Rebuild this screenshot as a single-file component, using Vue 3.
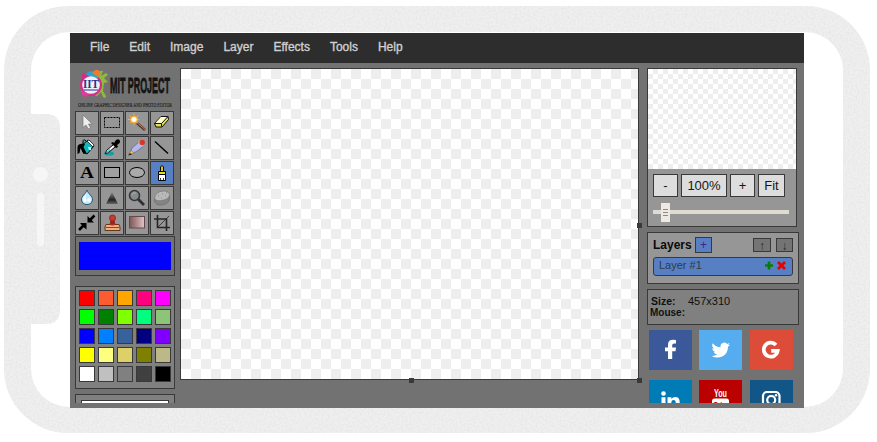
<script setup>
const menu = ['File', 'Edit', 'Image', 'Layer', 'Effects', 'Tools', 'Help']
const tools = [
  'select', 'marquee', 'wand', 'erase',
  'fill', 'picker', 'pencil', 'line',
  'letter', 'rect', 'ellipse', 'brush',
  'blur', 'sharpen', 'magnify', 'sponge',
  'shrink', 'stamp', 'gradient', 'crop',
]
const colors = [
  '#ff0000', '#ff5b31', '#ffa500', '#ff007f', '#ff00ff',
  '#00ff00', '#008000', '#7fff00', '#00ff7f', '#8cc478',
  '#0000ff', '#007fff', '#37629c', '#000080', '#7f00ff',
  '#ffff00', '#ffff7f', '#ddd068', '#808000', '#bdb888',
  '#ffffff', '#c0c0c0', '#808080', '#404040', '#000000',
]
</script>

<template>
  <main class="stage">
    <svg class="device" width="877" height="442" viewBox="0 0 877 442">
      <defs>
        <filter id="grain" x="0" y="0" width="100%" height="100%" color-interpolation-filters="sRGB">
          <feTurbulence type="fractalNoise" baseFrequency="0.5" numOctaves="2" seed="4" />
          <feColorMatrix values="0 0 0 0 0.85  0 0 0 0 0.85  0 0 0 0 0.85  0.9 0 0 0 -0.36" />
          <feComposite in2="SourceGraphic" operator="in" result="n" />
          <feMerge><feMergeNode in="SourceGraphic" /><feMergeNode in="n" /></feMerge>
        </filter>
      </defs>
      <g filter="url(#grain)" fill="#efefef">
        <path fill-rule="evenodd" d="M68 6H806A64 64 0 0 1 870 70V369A64 64 0 0 1 806 433H68A64 64 0 0 1 4 369V70A64 64 0 0 1 68 6ZM69 32A38 38 0 0 0 31 70V114H46Q60 114 60 128V310Q60 324 46 324H31V369A38 38 0 0 0 69 407H805A38 38 0 0 0 843 369V70A38 38 0 0 0 805 32Z" />
      </g>
      <circle cx="40.5" cy="174.5" r="7.5" fill="#f6f6f6" />
      <rect x="37" y="193" width="7" height="53" rx="3.5" fill="#f6f6f6" />
    </svg>

    <section class="editor">
      <nav class="menu"><span v-for="m in menu" :key="m">{{ m }}</span></nav>

      <div class="body">
        <aside class="left">
          <svg class="logo" width="100" height="44" viewBox="0 0 100 44">
            <g transform="translate(0 -1)">
              <path d="M22 8q4-3 6-2l-2 5 5-3 2 2-4 3 4 4-4 1-1 8 3 5q0 3-3 1l-2-5-4 4-5-2-2-22z" fill="#8dbb3c" />
              <circle cx="16" cy="20" r="11" fill="#d62c88" />
              <path d="M7 13q-1-5 2-4l4 1 2-5 2 4-1 6z" fill="#d62c88" />
              <path d="M11 9q5-6 11 0l2 4-7 1z" fill="#27a6cf" />
              <path d="M17 8q5-6 8-1 1 3-2 5z" fill="#ef7a2c" />
              <path d="M6 25q-1 6 5 7l5-4z" fill="#e03a9a" />
              <circle cx="16" cy="20" r="8.800" fill="#f2eef6" />
              <path d="M9 25h14" stroke="#6272b8" stroke-width="1.500" />
            </g>
            <text x="8" y="22" class="iit" textLength="16" lengthAdjust="spacingAndGlyphs">IIT</text>
            <g transform="translate(35 27) scale(.45 1)"><text x="0" y="0" class="mit" textLength="133" lengthAdjust="spacingAndGlyphs">MIT PROJECT</text></g>
            <text x="3" y="40.500" class="tag" textLength="94" lengthAdjust="spacingAndGlyphs">ONLINE GRAPHIC DESIGNER AND PHOTO EDITOR</text>
          </svg>

          <div class="tools">
            <div v-for="t in tools" :key="t" class="tool" :class="{ active: t === 'brush' }">
              <svg width="22" height="22" viewBox="0 0 22 22">
                <g v-if="t === 'select'">
                  <path d="M7 3v12.500l3-2.500 2.300 4 2.200-1.200-2-3.800h3.700z" fill="#eee" stroke="#777" stroke-width=".7" />
                </g>
                <rect v-else-if="t === 'marquee'" x="3.500" y="5.500" width="15" height="10" fill="none" stroke="#000" stroke-dasharray="2 1" />
                <g v-else-if="t === 'wand'">
                  <path d="M11 11l8 7" stroke="#603020" stroke-width="2.600" /><path d="M11 10.500l8 7" stroke="#d08050" />
                  <path d="M8 1.500V14M2 7.500h12M3.500 3.500l9 8M12.500 3.500l-9 8" stroke="#f5b040" stroke-dasharray="2 1" />
                  <circle cx="8" cy="7.500" r="3.500" fill="#ffe9a0" stroke="#f0a030" /><circle cx="8" cy="7.500" r="2" fill="#fff" />
                </g>
                <g v-else-if="t === 'erase'" stroke="#111">
                  <path d="M3.500 11.500l6.500-7h7l.5 3-6.500 7.500h-6z" fill="#e4e052" />
                  <path d="M4.500 11l5.500-6h6l-5 6z" fill="#fffccd" stroke="none" /><path d="M3.500 11.500h7l6.500-7M10.500 11.500v3" fill="none" />
                </g>
                <g v-else-if="t === 'fill'">
                  <path d="M5 9l7-6 6 6-7 8-4-2z" fill="#10b7ba" stroke="#000" /><path d="M11 4l6 6 1-2-5-5z" fill="#fff" stroke="#000" stroke-width=".7" />
                  <path d="M10 4q-3-3-3 1v5" fill="none" stroke="#000" />
                  <path d="M9 7Q2 6 1.500 10v7l2-1 1-5 3 6 3-1-3-6z" fill="#000" /><path d="M12 10h3v3h-2z" fill="#bff" />
                </g>
                <g v-else-if="t === 'picker'">
                  <ellipse cx="8" cy="16.500" rx="5" ry="2" fill="#109fa5" />
                  <path d="M4.500 16.500l1-3 7-6 2 2-7 6z" fill="#fff" stroke="#000" /><path d="M5.500 15l3-3 1 1-3 3z" fill="#38c6cb" />
                  <path d="M10 6l2-1 1 1 2-3q3-2 4 1 .5 2-3 4l1 2-2 1z" fill="#000" />
                </g>
                <g v-else-if="t === 'pencil'">
                  <path d="M4 16l2-5 7-6 4.500 4-7.500 6z" fill="#b4b9ea" stroke="#6669a0" stroke-width=".8" />
                  <path d="M3 17.500l2-4 3 2.500z" fill="#f0d060" stroke="#9b7028" stroke-width=".6" /><path d="M2 18.500l2-2.500 2 1.500z" fill="#222" />
                  <path d="M12 5l5 4.500 1-2-4-4z" fill="#edc64e" /><circle cx="16.200" cy="5.500" r="2.700" fill="#dc3429" />
                </g>
                <path v-else-if="t === 'line'" d="M4 4.500l13 12" stroke="#000" stroke-width="1.400" />
                <text v-else-if="t === 'letter'" x="4" y="16" class="glyph" textLength="14" lengthAdjust="spacingAndGlyphs">A</text>
                <rect v-else-if="t === 'rect'" x="3.500" y="5.500" width="15" height="10" fill="#a0a0a0" stroke="#000" />
                <ellipse v-else-if="t === 'ellipse'" cx="11" cy="10.500" rx="7.500" ry="5" fill="#aaa" stroke="#000" />
                <g v-else-if="t === 'brush'" stroke="#000">
                  <path d="M9.500 9V5q1.500-3 3 0v4" fill="#dcca28" /><path d="M7.500 12.500V9.500h7v3z" fill="#e8da1c" />
                  <path d="M7.500 12.500h7v6h-7z" fill="#fff" /><path d="M9.500 16v2M12.500 16v2" stroke-width=".8" />
                </g>
                <g v-else-if="t === 'blur'">
                  <path d="M11 3c-1 4-6 6-5.500 10a5.600 5.600 0 0 0 11 0C17 9 12 7 11 3z" fill="#c6e8f8" stroke="#255978" />
                  <path d="M10 7c-2 3-3 4-3 6 1 4 5 2 3-1-1-2 0-3 0-5z" fill="#fff" /><circle cx="13" cy="13" r="2" fill="#f2fcff" />
                </g>
                <g v-else-if="t === 'sharpen'">
                  <defs><linearGradient id="tri" x2="0" y2="1"><stop stop-color="#888" /><stop offset=".65" stop-color="#222" /><stop offset="1" stop-color="#666" /></linearGradient></defs>
                  <path d="M11 5l6 12H5z" fill="url(#tri)" />
                </g>
                <g v-else-if="t === 'magnify'">
                  <path d="M12 12l6 6" stroke="#303030" stroke-width="2.800" /><circle cx="8.500" cy="8.500" r="5" fill="#858b8c" stroke="#363636" stroke-width="1.600" />
                  <path d="M6 8q1-3 4-2" fill="none" stroke="#b0b0b0" />
                </g>
                <g v-else-if="t === 'sponge'">
                  <path d="M3.500 11v3q1 4.500 6.500 4 8-1 8.500-6V9z" fill="#848484" stroke="#6c6c6c" stroke-width=".7" />
                  <path d="M3.500 11q1-6.500 9-7 6 0 6 4.500-1 4-8 5-6 1-7-2.500z" fill="#bababa" stroke="#777" stroke-width=".7" />
                  <path d="M7 9h1M11 7h1M14 9h1M10 11h1M15 6h1" stroke="#888" />
                </g>
                <g v-else-if="t === 'shrink'">
                  <path d="M3 18l5-5M18.500 3.500l-5 5" stroke="#000" stroke-width="2.600" /><path d="M4 11h6.500v6.500l-2.500-2-2-2zM11.500 4v6.500h6.500l-2.500-2.500z" fill="#000" />
                </g>
                <g v-else-if="t === 'stamp'">
                  <path d="M10 8h3l1 5H9z" fill="#a5211c" stroke="#71160f" stroke-width=".6" /><circle cx="11.500" cy="6" r="3" fill="#c93931" stroke="#8e1e18" stroke-width=".8" />
                  <path d="M5 12.500h13l1 2.500v3.500H4V15z" fill="#eeb07c" stroke="#69351e" /><path d="M4.500 15.500h14" stroke="#854823" /><path d="M8 12q3.500 3 7 0" fill="#a92c25" />
                </g>
                <g v-else-if="t === 'gradient'">
                  <defs><linearGradient id="gr"><stop stop-color="#805356" /><stop offset="1" stop-color="#dfc6c8" /></linearGradient></defs>
                  <rect x="3.500" y="4.500" width="15" height="11.500" fill="url(#gr)" stroke="#66494b" />
                </g>
                <g v-else fill="none" stroke="#262626">
                  <path d="M3 7h12.500v12M6.500 3v12.500H19" stroke-width="1.600" /><path d="M7 15L18 4" stroke-width=".8" />
                </g>
              </svg>
            </div>
          </div>

          <div class="current"><div class="fill"></div></div>
          <div class="palette"><i v-for="c in colors" :key="c" :style="{ background: c }"></i></div>
          <div class="options"><div class="field"></div></div>
        </aside>

        <div class="canvas">
          <b class="grip east"></b><b class="grip south"></b><b class="grip corner"></b>
        </div>

        <aside class="right">
          <div class="preview">
            <div class="thumb"></div>
            <div class="zoom">
              <span class="b25">-</span><span class="b46">100%</span><span class="b25">+</span><span class="b27">Fit</span>
            </div>
            <div class="slider"><div class="knob"><i></i><i></i><i></i></div></div>
          </div>
          <div class="layers">
            <div class="head">
              <strong>Layers</strong><span class="add">+</span>
              <span class="move first">↑</span><span class="move">↓</span>
            </div>
            <div class="layer">
              <span>Layer #1</span>
              <svg width="23" height="10" viewBox="0 0 23 10">
                <path d="M1 4.500h8M5 .5v8" stroke="#087c08" stroke-width="2.600" />
                <path d="M14 1l7 7M21 1l-7 7" stroke="#e80000" stroke-width="2.800" />
              </svg>
            </div>
          </div>
          <div class="info">
            <div class="size"><b>Size:</b><span>457x310</span></div>
            <div class="mouse">Mouse:</div>
          </div>
          <div class="social">
            <div class="fb"><svg width="43" height="40" viewBox="0 0 43 40"><path d="M27 10v3.400h-1.800q-2 0-2 1.800v2.200H27l-.5 3.800h-3.300V29H19v-7.800h-3v-3.800h3v-2.800Q19 9.800 24 9.800q2 0 3 .2z" fill="#fff" /></svg></div>
            <div class="tw"><svg width="43" height="40" viewBox="0 0 43 40"><path d="M31 14.400q-1 .5-2.100.6 1.200-.7 1.600-2-1.100.7-2.400.9a3.800 3.800 0 0 0-6.500 3.400q-4.700-.2-7.800-4-1.800 3.200 1.200 5.100-.9 0-1.700-.5.100 3 3 3.800-.8.200-1.700 0 .9 2.500 3.600 2.600-2.400 1.900-5.600 1.600 2.700 1.700 5.800 1.700C24.900 27.600 29 23 29 16.800q1.200-1 2-2.400z" fill="#fff" /></svg></div>
            <div class="gg"><svg width="43" height="40" viewBox="0 0 43 40"><path d="M26 15A7 7 0 1 0 27.700 20.800H21.200" fill="none" stroke="#fff" stroke-width="3.700" /></svg></div>
            <div class="li"><svg width="43" height="40" viewBox="0 0 43 40"><g fill="#fff"><circle cx="14.500" cy="13.500" r="2.300" /><path d="M12.500 17.200h4v12h-4zM18.500 17.200h3.900v1.700q1.300-2 3.900-2 4.400 0 4.400 5.300v7h-4v-6.500q0-2.700-2.100-2.700-2.300 0-2.300 3V29h-3.800z" /></g></svg></div>
            <div class="yt"><svg width="43" height="40" viewBox="0 0 43 40"><text x="15" y="17" class="you" textLength="13" lengthAdjust="spacingAndGlyphs">You</text><rect x="13" y="18.500" width="17" height="12.500" rx="2.500" fill="#fff" /><text x="15" y="27" class="tube" textLength="13" lengthAdjust="spacingAndGlyphs">Tube</text></svg></div>
            <div class="ig"><svg width="43" height="40" viewBox="0 0 43 40"><g fill="none" stroke="#fff" stroke-width="2.200"><rect x="13" y="12" width="16.500" height="16" rx="4" /><circle cx="21.200" cy="20" r="4" /></g><circle cx="26" cy="15.300" r="1.200" fill="#fff" /></svg></div>
          </div>
        </aside>
      </div>
    </section>
  </main>
</template>

<style>
body { margin: 0; background: #fff; overflow: hidden; }
</style>

<style scoped>
* { box-sizing: border-box; }
svg { display: block; flex: none; }
.stage { position: relative; width: 877px; height: 442px; padding: 33px 0 0 70px; font-family: "Liberation Sans", Arial, sans-serif; overflow: hidden; }
.device { position: absolute; left: 0; top: 0; }
.editor { position: relative; width: 734px; height: 375px; background: #727272; padding-bottom: 5px; }
.menu { height: 30px; background: #2d2d2d; display: flex; gap: 20px; padding: 7px 20px 0; font-size: 12px; line-height: 14px; color: #d0d0d0; -webkit-text-stroke: .35px #d0d0d0; }
.body { display: flex; align-items: flex-start; height: 340px; overflow: hidden; padding-left: 5px; }
.left { width: 100px; padding-top: 3px; flex: none; }
.logo { margin-bottom: 1px; overflow: visible; }
.iit { font: bold 13px "Liberation Serif", serif; fill: #28328c; }
.mit { font: bold 22px "Liberation Sans", sans-serif; fill: #141414; stroke: #141414; stroke-width: .8px; }
.tag { font: 7px "Liberation Serif", serif; fill: #1c1c1c; stroke: #1c1c1c; stroke-width: .15px; }
.tools { display: grid; grid-template-columns: repeat(4, 24px); gap: 1px; }
.tool { width: 24px; height: 24px; border: 1px solid #393939; background: #969696; }
.tool.active { background: #5680c3; }
.glyph { font: bold 17px "Liberation Serif", serif; fill: #000; }
.current { height: 40px; margin-top: 1px; border: 1px solid #393939; padding: 5px 3px; }
.fill { height: 28px; background: #00f; }
.palette { height: 103px; margin-top: 10px; border: 1px solid #393939; background: #808080; padding: 3px; display: grid; grid-template-columns: repeat(5, 16px); grid-auto-rows: 16px; gap: 3px; }
.palette i { border: 1px solid #393939; }
.options { height: 30px; margin-top: 5px; border: 1px solid #393939; background: #808080; padding: 5px; }
.field { height: 20px; background: #fff; border: 1px solid #393939; width: 88px; }
.canvas { position: relative; flex: none; width: 459px; height: 312px; margin: 5px 0 0 5px; border: 1px solid #393939; background: repeating-conic-gradient(#eee 0 25%, #fff 0 50%) 0 0 / 20px 20px; background-clip: padding-box; }
.grip { position: absolute; width: 5px; height: 5px; background: #393939; }
.east { left: 456px; top: 154px; }
.south { left: 228px; top: 309px; }
.corner { left: 456px; top: 309px; }
.right { flex: none; width: 152px; margin: 5px 0 0 8px; }
.preview { width: 150px; height: 159px; border: 1px solid #393939; background: #969696; }
.thumb { height: 100px; background: repeating-conic-gradient(#eee 0 25%, #fff 0 50%) 0 0 / 10px 10px; }
.zoom { display: flex; gap: 3px; padding: 5px 0 0 5px; font-size: 13px; line-height: 21px; text-align: center; color: #161616; }
.zoom span { height: 23px; border: 1px solid #393939; background: #ddd; }
.b25 { width: 25px; } .b46 { width: 46px; } .b27 { width: 27px; }
.slider { width: 136px; height: 19px; margin: 6px 0 0 5px; padding-left: 8px; background: linear-gradient(#dfdad2, #dfdad2) 0 7px / 136px 4px no-repeat; }
.knob { width: 9px; height: 19px; background: #eeeae3; display: flex; flex-direction: column; align-items: center; padding-top: 6px; gap: 2px; }
.knob i { width: 5px; height: 1px; background: #8c8882; }
.layers { width: 152px; height: 52px; margin-top: 5px; border: 1px solid #393939; background: #969696; padding: 4px 5px; }
.head { display: flex; height: 16px; font-size: 12px; line-height: 16px; color: #0a0a0a; }
.head strong { width: 42px; }
.add { width: 17px; height: 16px; border: 1px solid #393939; background: #5680c3; color: #551a8b; line-height: 14px; text-align: center; }
.move { width: 17px; height: 14px; margin: 1px 0 0 5px; border: 1px solid #393939; background: #747474; line-height: 14px; text-align: center; color: #282828; overflow: hidden; }
.move.first { width: 18px; margin-left: 41px; }
.layer { display: flex; justify-content: space-between; align-items: center; width: 140px; height: 19px; margin-top: 4px; padding: 0 5px; border: 1px solid #393939; border-radius: 3px; background: #5680c3; font-size: 11px; line-height: 15px; color: #303a48; }
.layer span { padding-bottom: 2px; }
.layer svg { margin-bottom: 1px; }
.info { height: 36px; margin-top: 5px; border: 1px solid #393939; background: #808080; padding: 5px 0 0 3px; color: #101010; }
.size { display: flex; font-size: 11px; line-height: 12px; }
.size b { width: 37px; font-size: 10.500px; }
.mouse { font-size: 10px; line-height: 11px; font-weight: bold; margin-left: -1px; }
.social { display: grid; grid-template-columns: 50px 51px 43px; row-gap: 10px; padding: 5px 0 0 2px; }
.social div { width: 43px; height: 40px; }
.fb { background: #3b5998; } .tw { background: #55acee; } .gg { background: #dd4b39; }
.li { background: #007bb5; } .yt { background: #bb0000; } .ig { background: #125688; }
.you { font: bold 10px "Liberation Sans", sans-serif; fill: #fff; }
.tube { font: bold 8px "Liberation Sans", sans-serif; fill: #b00; }
</style>
